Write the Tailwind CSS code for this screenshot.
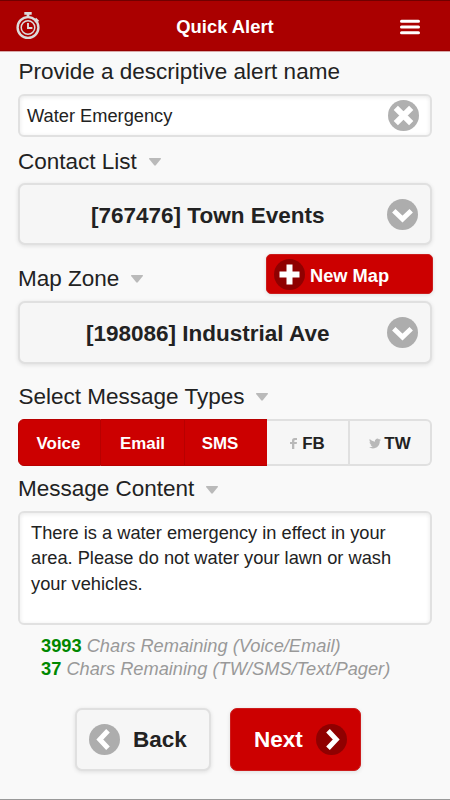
<!DOCTYPE html>
<html lang="en">
<head>
    <meta charset="UTF-8">
    <meta name="viewport" content="width=device-width, initial-scale=1.0">
    <title>Quick Alert</title>
    <script src="https://cdn.jsdelivr.net/npm/@tailwindcss/browser@4"></script>
</head>
<body class="bg-[#f9f9f9] font-['Liberation_Sans',Arial,sans-serif] text-[18.25px] text-[#222]">

    <div class="flex h-[800px] w-[450px] flex-col overflow-hidden border-b border-[#999]">

        <header class="flex h-[52px] shrink-0 items-center justify-between border-t border-b border-t-[#700000] border-b-[#d9a9a9] bg-[#aa0000] pl-4 pr-[30px] shadow-[inset_0_-1px_0_#960000]">
            <svg class="h-7 w-6" viewBox="0 0 24 28" fill="none" stroke="#dcdcdc">
                <path d="M8.300 1.300h7.400M12 1.500v4" stroke-width="2.700"/>
                <path d="M19.500 6.500l3 2.800M21 7.800l-2 2" stroke-width="1.800"/>
                <circle cx="12" cy="15.500" r="10.400" stroke-width="2.400"/>
                <circle cx="12" cy="15.500" r="6.800" stroke-width="1.500"/>
                <path d="M12 11v5h4.400" stroke-width="1.900"/>
            </svg>
            <h1 class="ml-2.5 pt-0.5 text-[18.4px] font-bold text-white">Quick Alert</h1>
            <svg class="mt-px h-4 w-5" viewBox="0 0 20 16" stroke="#fff" stroke-width="3" stroke-linecap="round">
                <path d="M1.500 2.200h17M1.500 8h17M1.500 13.800h17"/>
            </svg>
        </header>

        <main class="flex flex-col px-[18px]">
            <label class="mt-1.5 h-7 pl-[0.5px] text-[22.5px] leading-7">Provide a descriptive alert name</label>
            <div class="mt-2 flex h-[43px] items-center justify-between rounded-[6px] border-2 border-[#e1e1e1] bg-white pl-[7px] pr-[11px] shadow-[inset_0_1px_4px_#00000018]">
                <span class="pt-px">Water Emergency</span>
                <svg class="size-[31px]" viewBox="0 0 31 31">
                    <circle cx="15.5" cy="15.5" r="15.5" fill="#b0b0b0"/>
                    <path d="M7.800 7.800l15.400 15.400M23.200 7.800L7.800 23.200" stroke="#fff" stroke-width="6"/>
                </svg>
            </div>

            <div class="mt-[11px] flex h-7 items-center gap-3 text-[22.5px]">
                <span>Contact List</span>
                <svg class="h-2 w-3" viewBox="0 0 12 8" fill="#bababa"><path d="M.6 0h10.8q1 .4.3 1.3L6.8 7.3q-.8.8-1.6 0L.3 1.3Q-.4.4.6 0z"/></svg>
            </div>
            <button class="mt-[7px] flex h-[62px] items-center rounded-[7px] border-2 border-[#e0e0e0] bg-[#f6f6f6] pl-[71px] pr-3 text-left text-[22.5px] font-bold shadow-[0_1px_4px_#0000001c]">
                <span class="flex-1 pt-[3px]">[767476] Town Events</span>
                <svg class="mt-px size-[31px]" viewBox="0 0 31 31" fill="none">
                    <circle cx="15.5" cy="15.5" r="15.5" fill="#adadad"/>
                    <path d="M6.800 11.800l8.700 8.200 8.700-8.200" stroke="#fff" stroke-width="5"/>
                </svg>
            </button>

            <div class="-mr-px mt-[9px] flex h-10 justify-between">
                <div class="flex h-[50px] items-center gap-3 text-[22.5px]">
                    <span>Map Zone</span>
                    <svg class="h-2 w-3" viewBox="0 0 12 8" fill="#bababa"><path d="M.6 0h10.8q1 .4.3 1.3L6.8 7.3q-.8.8-1.6 0L.3 1.3Q-.4.4.6 0z"/></svg>
                </div>
                <button class="flex h-10 w-[167px] items-center gap-[5px] rounded-[5px] border border-[#cc1c1c] bg-[#cc0000] pl-[7px] font-bold text-white shadow-[0_1px_4px_#0000001c]">
                    <svg class="size-[31px]" viewBox="0 0 31 31">
                        <circle cx="15.5" cy="15.5" r="15.5" fill="#8f0000"/>
                        <path d="M15.500 5.500v20M5.500 15.500h20" stroke="#fff" stroke-width="6"/>
                    </svg>
                    <span class="pt-[3px]">New Map</span>
                </button>
            </div>
            <button class="mt-[7px] flex h-[63px] items-center rounded-[7px] border-2 border-[#e0e0e0] bg-[#f6f6f6] pl-[66px] pr-3 text-left text-[22.5px] font-bold shadow-[0_1px_4px_#0000001c]">
                <span class="flex-1 pt-0.5">[198086] Industrial Ave</span>
                <svg class="size-[31px]" viewBox="0 0 31 31" fill="none">
                    <circle cx="15.5" cy="15.5" r="15.5" fill="#adadad"/>
                    <path d="M6.800 11.800l8.700 8.200 8.700-8.200" stroke="#fff" stroke-width="5"/>
                </svg>
            </button>

            <div class="mt-[19px] flex h-7 items-center gap-3 pl-[0.5px] text-[22.5px]">
                <span>Select Message Types</span>
                <svg class="h-2 w-3" viewBox="0 0 12 8" fill="#bababa"><path d="M.6 0h10.8q1 .4.3 1.3L6.8 7.3q-.8.8-1.6 0L.3 1.3Q-.4.4.6 0z"/></svg>
            </div>
            <div class="mt-2 flex h-[47px] text-[16.9px] font-bold">
                <button class="w-[83px] rounded-l-[6px] border border-[#b80000] bg-[#cc0000] pr-0.5 pt-0.5 text-white">Voice</button>
                <button class="w-[84px] border-y border-r border-[#b80000] bg-[#cc0000] pt-0.5 text-white">Email</button>
                <button class="w-[82px] border-y border-[#b80000] bg-[#cc0000] pr-3 pt-0.5 text-white">SMS</button>
                <button class="flex w-[83px] items-center justify-center gap-[5px] border-y-2 border-r-2 border-[#e0e0e0] bg-[#f6f6f6] pt-0.5">
                    <svg class="h-[11px] w-[7px]" viewBox="0 0 7 11" fill="#b8b8b8"><path d="M2 11V6H0V4h2V2.700Q2 0 4.600 0H7v2H5.300Q4.300 2 4.300 2.900V4H7L6.700 6H4.300v5z"/></svg>
                    <span>FB</span>
                </button>
                <button class="flex w-[82px] items-center justify-center gap-[3px] rounded-r-[6px] border-y-2 border-r-2 border-[#e0e0e0] bg-[#f6f6f6] pt-0.5">
                    <svg class="h-[11px] w-3" viewBox="0 2 24 20" fill="#b8b8b8"><path d="M23.950 4.570a10 10 0 01-2.820.770 4.960 4.960 0 002.160-2.720c-.950.550-2 .950-3.130 1.180a4.920 4.920 0 00-8.380 4.480C7.690 8.100 4.070 6.130 1.640 3.160a4.820 4.820 0 00-.670 2.480c0 1.710.870 3.210 2.190 4.100a4.900 4.900 0 01-2.230-.620v.060a4.920 4.920 0 003.950 4.830 5 5 0 01-2.210.080 4.940 4.940 0 004.600 3.420A9.870 9.870 0 010 19.540a14 14 0 007.550 2.210c9.050 0 14-7.500 14-13.980 0-.210 0-.420-.020-.630a9.940 9.940 0 002.460-2.550z"/></svg>
                    <span>TW</span>
                </button>
            </div>

            <div class="mt-[9px] flex h-7 items-center gap-3 text-[22.5px]">
                <span>Message Content</span>
                <svg class="mt-px h-2 w-3" viewBox="0 0 12 8" fill="#bababa"><path d="M.6 0h10.8q1 .4.3 1.3L6.8 7.3q-.8.8-1.6 0L.3 1.3Q-.4.4.6 0z"/></svg>
            </div>
            <div class="mt-2 h-[114px] rounded-[6px] border-2 border-[#e1e1e1] bg-white py-[7px] pl-[11px] pr-5 leading-[25.3px] shadow-[inset_0_1px_4px_#00000018]">There is a water emergency in effect in your area. Please do not water your lawn or wash your vehicles.</div>

            <div class="mt-2.5 pl-[23px] italic leading-[22.5px] text-[#999]">
                <p><b class="not-italic text-[#008800]">3993</b> Chars Remaining (Voice/Email)</p>
                <p><b class="not-italic text-[#008800]">37</b> Chars Remaining (TW/SMS/Text/Pager)</p>
            </div>

            <div class="ml-[57px] mt-7 flex gap-[19px] text-[22.5px] font-bold">
                <button class="flex h-[63px] w-[136px] items-center gap-[13px] rounded-[7px] border-2 border-[#e0e0e0] bg-[#f6f6f6] pl-3 shadow-[0_1px_4px_#0000001c]">
                    <svg class="size-[31px]" viewBox="0 0 31 31" fill="none">
                        <circle cx="15.5" cy="15.5" r="15.5" fill="#adadad"/>
                        <path d="M19 6.800l-8.200 8.700 8.200 8.700" stroke="#fff" stroke-width="5"/>
                    </svg>
                    <span>Back</span>
                </button>
                <button class="flex h-[63px] w-[131px] items-center gap-[13px] rounded-[7px] border border-[#cc1c1c] bg-[#cc0000] pl-[23px] text-white shadow-[0_1px_4px_#0000001c]">
                    <span>Next</span>
                    <svg class="size-[31px]" viewBox="0 0 31 31" fill="none">
                        <circle cx="15.5" cy="15.5" r="15.5" fill="#8f0000"/>
                        <path d="M12 6.800l8.200 8.700-8.200 8.700" stroke="#fff" stroke-width="5"/>
                    </svg>
                </button>
            </div>
        </main>
    </div>

</body>
</html>
